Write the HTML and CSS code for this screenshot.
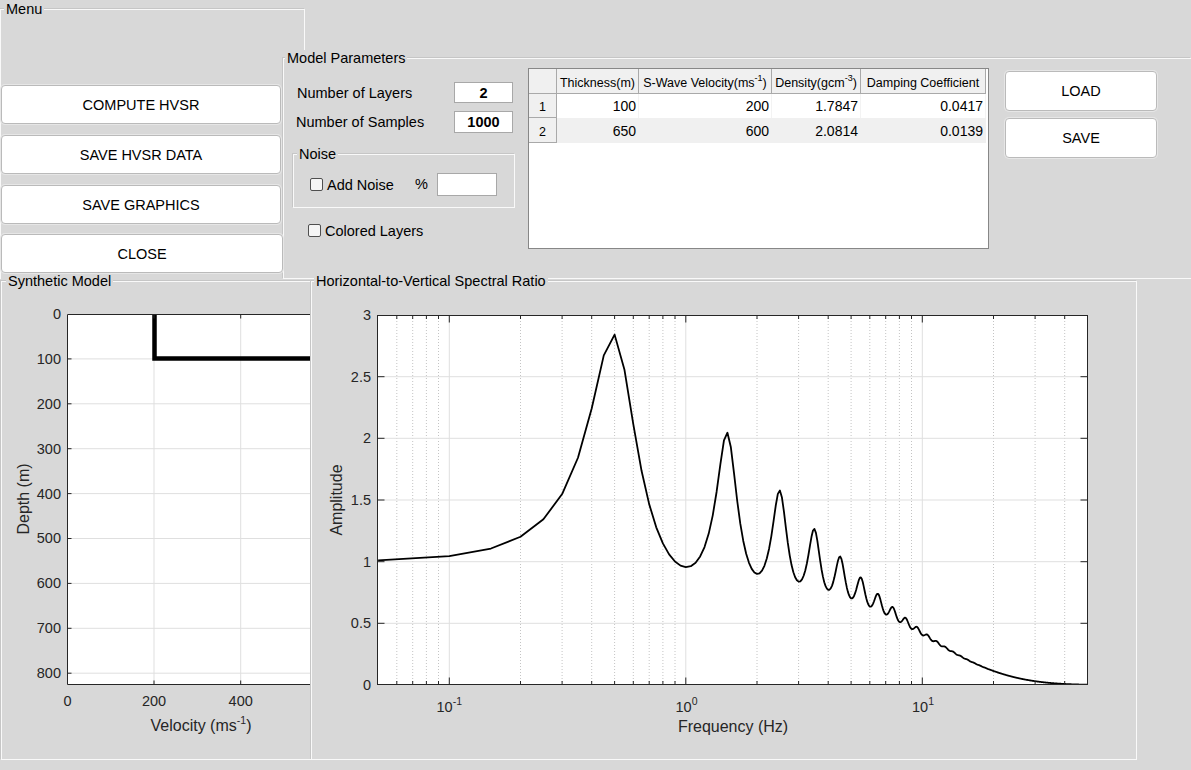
FILE: index.html
```html
<!DOCTYPE html>
<html lang="en">
<head>
<meta charset="utf-8">
<title>HVSR Synthetic Model</title>
<link rel="stylesheet" href="styles.css">
</head>
<body>
<div class="app">
  <div class="top">
    <div class="panel menu-panel"><span class="panel-title title-menu">Menu</span></div>

    <div class="panel params-panel">
      <span class="panel-title title-params">Model Parameters</span>

      <div class="param-form">
        <div class="field-row row-layers">
          <label>Number of Layers</label>
          <input class="num-input" type="text" value="2" readonly>
        </div>
        <div class="field-row row-samples">
          <label>Number of Samples</label>
          <input class="num-input" type="text" value="1000" readonly>
        </div>
        <div class="panel noise-panel">
          <span class="panel-title title-noise">Noise</span>
          <label class="check"><input type="checkbox"><span>Add Noise</span></label>
          <span class="percent">%</span>
          <input class="text-input noise-input" type="text" value="" readonly>
        </div>
        <label class="check colored"><input type="checkbox"><span>Colored Layers</span></label>
      </div>

      <div class="param-table">
        <div class="grid-table">
          <div class="th corner"></div>
          <div class="th"><span>Thickness(m)</span></div>
          <div class="th"><span>S-Wave Velocity(ms<span class="sup">-1</span>)</span></div>
          <div class="th"><span>Density(gcm<span class="sup">-3</span>)</span></div>
          <div class="th"><span>Damping Coefficient</span></div>

          <div class="rh">1</div>
          <div class="td">100</div>
          <div class="td">200</div>
          <div class="td">1.7847</div>
          <div class="td">0.0417</div>

          <div class="rh">2</div>
          <div class="td alt">650</div>
          <div class="td alt">600</div>
          <div class="td alt">2.0814</div>
          <div class="td alt">0.0139</div>
        </div>
      </div>

      <div class="side-buttons">
        <button class="btn btn-side">LOAD</button>
        <button class="btn btn-side">SAVE</button>
      </div>
    </div>

    <div class="menu-buttons">
      <button class="btn btn-menu">COMPUTE HVSR</button>
      <button class="btn btn-menu">SAVE HVSR DATA</button>
      <button class="btn btn-menu">SAVE GRAPHICS</button>
      <button class="btn btn-menu btn-close">CLOSE</button>
    </div>
  </div>

  <div class="bottom">
    <div class="panel synth-panel">
      <span class="panel-title title-synth">Synthetic Model</span>
      <svg class="axes-svg" width="308" height="477" viewBox="0 0 308 477">
        <g transform="translate(-2,-282)">
          <rect x="67" y="314" width="260" height="370" fill="#fff"/>
          <path class="grid-major" d="M154,314V684M240.7,314V684M67,358.9H330M67,403.8H330M67,448.7H330M67,493.6H330M67,538.5H330M67,583.4H330M67,628.3H330M67,673.2H330"/>
          <path class="step-line" d="M154.5,314V358.6H330"/>
          <path class="axis-line" d="M330,314.5H67.5V684.5H330"/>
          <path class="axis-line" d="M67.5,358.9h4M67.5,403.8h4M67.5,448.7h4M67.5,493.6h4M67.5,538.5h4M67.5,583.4h4M67.5,628.3h4M67.5,673.2h4M154,684.5v-4M240.7,684.5v-4M154,314.5v4M240.7,314.5v4"/>
          <g class="tick" text-anchor="end">
            <text x="61" y="319">0</text>
            <text x="61" y="364">100</text>
            <text x="61" y="409">200</text>
            <text x="61" y="454">300</text>
            <text x="61" y="499">400</text>
            <text x="61" y="543">500</text>
            <text x="61" y="588">600</text>
            <text x="61" y="633">700</text>
            <text x="61" y="678">800</text>
          </g>
          <g class="tick" text-anchor="middle">
            <text x="67.5" y="706">0</text>
            <text x="154" y="706">200</text>
            <text x="240.7" y="706">400</text>
          </g>
          <text class="axis-label" x="201" y="731" text-anchor="middle">Velocity (ms<tspan class="sup-t" dy="-7">-1</tspan><tspan dy="7">)</tspan></text>
          <text class="axis-label" transform="translate(29,499) rotate(-90)" text-anchor="middle">Depth (m)</text>
        </g>
      </svg>
    </div>

    <div class="panel hvsr-panel">
      <span class="panel-title title-hvsr">Horizontal-to-Vertical Spectral Ratio</span>
      <svg class="axes-svg" width="824" height="477" viewBox="0 0 824 477">
        <defs>
          <clipPath id="hvsr-clip"><rect x="377" y="315" width="711" height="370"/></clipPath>
        </defs>
        <g transform="translate(-312,-282)">
          <rect x="377" y="315" width="711" height="370" fill="#fff"/>
          <path class="grid-minor" d="M396.8,315V685M412.7,315V685M426.4,315V685M438.5,315V685M520.5,315V685M562.1,315V685M591.7,315V685M614.6,315V685M633.3,315V685M649.2,315V685M662.9,315V685M675,315V685M757,315V685M798.6,315V685M828.2,315V685M851.1,315V685M869.8,315V685M885.7,315V685M899.4,315V685M911.5,315V685M993.5,315V685M1035.1,315V685M1064.7,315V685"/>
          <path class="grid-major" d="M449.3,315V685M685.8,315V685M922.3,315V685M377,376.7H1088M377,438.3H1088M377,500H1088M377,561.7H1088M377,623.3H1088"/>
          <path id="hvsr-curve" class="curve" clip-path="url(#hvsr-clip)" d=""/>
          <rect class="axis-box" x="377.5" y="315.5" width="710" height="369"/>
          <path class="axis-line" d="M377.5,376.7h7M377.5,438.3h7M377.5,500h7M377.5,561.7h7M377.5,623.3h7M1087.5,376.7h-7M1087.5,438.3h-7M1087.5,500h-7M1087.5,561.7h-7M1087.5,623.3h-7M449.3,684.5v-7M685.8,684.5v-7M922.3,684.5v-7M449.3,315.5v7M685.8,315.5v7M922.3,315.5v7"/>
          <path class="axis-line" d="M396.8,684.5v-3.5M412.7,684.5v-3.5M426.4,684.5v-3.5M438.5,684.5v-3.5M520.5,684.5v-3.5M562.1,684.5v-3.5M591.7,684.5v-3.5M614.6,684.5v-3.5M633.3,684.5v-3.5M649.2,684.5v-3.5M662.9,684.5v-3.5M675,684.5v-3.5M757,684.5v-3.5M798.6,684.5v-3.5M828.2,684.5v-3.5M851.1,684.5v-3.5M869.8,684.5v-3.5M885.7,684.5v-3.5M899.4,684.5v-3.5M911.5,684.5v-3.5M993.5,684.5v-3.5M1035.1,684.5v-3.5M1064.7,684.5v-3.5M396.8,315.5v3.5M412.7,315.5v3.5M426.4,315.5v3.5M438.5,315.5v3.5M520.5,315.5v3.5M562.1,315.5v3.5M591.7,315.5v3.5M614.6,315.5v3.5M633.3,315.5v3.5M649.2,315.5v3.5M662.9,315.5v3.5M675,315.5v3.5M757,315.5v3.5M798.6,315.5v3.5M828.2,315.5v3.5M851.1,315.5v3.5M869.8,315.5v3.5M885.7,315.5v3.5M899.4,315.5v3.5M911.5,315.5v3.5M993.5,315.5v3.5M1035.1,315.5v3.5M1064.7,315.5v3.5"/>
          <g class="tick" text-anchor="end">
            <text x="371" y="320">3</text>
            <text x="371" y="382">2.5</text>
            <text x="371" y="443">2</text>
            <text x="371" y="505">1.5</text>
            <text x="371" y="567">1</text>
            <text x="371" y="628">0.5</text>
            <text x="371" y="690">0</text>
          </g>
          <g class="tick" text-anchor="middle">
            <text x="449.3" y="712">10<tspan class="sup-t" dy="-7">-1</tspan></text>
            <text x="686.5" y="712">10<tspan class="sup-t" dy="-7">0</tspan></text>
            <text x="923" y="712">10<tspan class="sup-t" dy="-7">1</tspan></text>
          </g>
          <text class="axis-label" x="733" y="732" text-anchor="middle">Frequency (Hz)</text>
          <text class="axis-label" transform="translate(342,500) rotate(-90)" text-anchor="middle">Amplitude</text>
        </g>
      </svg>
    </div>
  </div>
</div>
<script src="script.js"></script>
</body>
</html>
```

FILE: styles.css
```css
* { box-sizing: border-box; }

html, body { margin: 0; padding: 0; }

body {
  width: 1191px;
  height: 770px;
  overflow: hidden;
  background: #d8d8d8;
  font-family: "Liberation Sans", Arial, sans-serif;
  font-size: 14.5px;
  color: #000;
}

.top {
  display: grid;
  grid-template-columns: 283px 22px 886px;
  grid-template-rows: 9px 49px 221px 2px;
  height: 281px;
}

.panel {
  position: relative;
  border: 1px solid #f9f9f9;
  box-shadow: -1px -1px 0 #c6c6c6;
}

.panel-title {
  position: absolute;
  top: -9px;
  padding: 0 2px;
  background: #d8d8d8;
  font-size: 14.5px;
  line-height: 17px;
  white-space: nowrap;
}

.title-menu { left: 3px; }
.title-params { left: 1px; }
.title-noise { left: 3px; }
.title-synth { left: 4px; }
.title-hvsr { left: 2px; }

.menu-panel {
  grid-column: 1 / 3;
  grid-row: 2 / 4;
  border-bottom: none;
}

.params-panel {
  grid-column: 2 / 4;
  grid-row: 3 / 4;
  border-right: none;
  background: #d8d8d8;
  display: flex;
  align-items: flex-start;
  padding: 9px 0 0 9px;
}

.menu-buttons {
  grid-column: 1 / 2;
  grid-row: 3 / 5;
  z-index: 2;
  display: flex;
  flex-direction: column;
  gap: 11px;
  padding: 27px 0 0 1px;
}

.btn {
  display: block;
  padding: 0;
  background: #fff;
  border: 1px solid #bababa;
  border-radius: 4px;
  box-shadow: 0 0 0 1px #e6e6e6;
  font-family: "Liberation Sans", Arial, sans-serif;
  font-size: 14.5px;
  color: #000;
}

.btn-menu { width: 280px; height: 39px; }
.btn-close { width: 282px; margin-top: -1px; }

/* parameter form */
.param-form {
  flex: none;
  width: 222px;
  display: flex;
  flex-direction: column;
}

.field-row {
  display: flex;
  align-items: center;
  padding-left: 4px;
}

.row-layers { margin-top: 14px; height: 21px; }
.row-samples { margin-top: 8px; height: 22px; padding-left: 3px; }

.num-input,
.text-input {
  background: #fff;
  border: 1px solid #a8a8a8;
  padding: 0;
  font-family: "Liberation Sans", Arial, sans-serif;
  font-size: 14.5px;
  color: #000;
  outline: none;
}

.num-input {
  margin-left: auto;
  margin-right: 2px;
  width: 59px;
  height: 100%;
  font-weight: bold;
  text-align: center;
}

.noise-panel {
  margin-top: 21px;
  width: 222px;
  height: 54px;
  display: flex;
  align-items: flex-start;
  padding: 18px 0 0 16px;
}

.check {
  display: flex;
  align-items: center;
  gap: 4px;
  height: 23px;
}

.check input[type="checkbox"] {
  -webkit-appearance: none;
  appearance: none;
  margin: 0;
  width: 13px;
  height: 13px;
  border: 1px solid #4f4f4f;
  border-radius: 2px;
  background: #f5f5f5;
}

.percent {
  margin-left: 21px;
  line-height: 23px;
}

.noise-input {
  margin-left: 9px;
  width: 60px;
  height: 23px;
}

.colored {
  margin-top: 11px;
  padding-left: 15px;
}

/* table */
.param-table {
  flex: none;
  margin-left: 13px;
  width: 461px;
  height: 181px;
  border: 1px solid #878787;
  background: #fff;
}

.grid-table {
  display: grid;
  grid-template-columns: 28px 82px 133px 89px 125px;
  grid-template-rows: 25px 24px 25px;
}

.th {
  display: flex;
  align-items: center;
  justify-content: center;
  padding-top: 4px;
  background: #f0f0f0;
  border-right: 1px solid #a9a9a9;
  border-bottom: 1px solid #a9a9a9;
  font-size: 12.5px;
  white-space: nowrap;
}

.sup {
  font-size: 9px;
  vertical-align: 6px;
  line-height: 0;
}

.rh {
  display: flex;
  align-items: center;
  justify-content: center;
  padding-top: 3px;
  background: #f0f0f0;
  border-right: 1px solid #a9a9a9;
  border-bottom: 1px solid #a9a9a9;
  font-size: 12.5px;
}

.td {
  display: flex;
  align-items: center;
  justify-content: flex-end;
  padding-right: 2px;
  border-right: 1px solid #f3f3f3;
  font-size: 14px;
}

.td.alt { background: #f0f0f0; border-right-color: #f0f0f0; }

.side-buttons {
  flex: none;
  margin-left: 16px;
  padding-top: 3px;
  display: flex;
  flex-direction: column;
  gap: 7px;
}

.btn-side { width: 152px; height: 40px; }

/* plots */
.bottom {
  display: flex;
  align-items: flex-start;
  height: 479px;
}

.synth-panel {
  margin-left: 1px;
  width: 310px;
  height: 479px;
}

.hvsr-panel {
  width: 826px;
  height: 479px;
}

.axes-svg {
  display: block;
  overflow: hidden;
}

.axes-svg text {
  font-family: "Liberation Sans", Arial, sans-serif;
  fill: #262626;
}

.tick { font-size: 14.5px; }
.axis-label { font-size: 16px; }
.sup-t { font-size: 10.5px; }

.grid-major {
  fill: none;
  stroke: #dfdfdf;
  stroke-width: 1;
}

.grid-minor {
  fill: none;
  stroke: #c4c4c4;
  stroke-width: 1;
  stroke-dasharray: 1 2;
}

.axis-line {
  fill: none;
  stroke: #262626;
  stroke-width: 1;
}

.axis-box {
  fill: none;
  stroke: #262626;
  stroke-width: 1;
}

.step-line {
  fill: none;
  stroke: #000;
  stroke-width: 4.5;
  stroke-linejoin: miter;
}

.curve {
  fill: none;
  stroke: #000;
  stroke-width: 1.8;
  stroke-linejoin: round;
}
```

FILE: script.js
```js
(function () {
  var h = 100, v1 = 200, r1 = 1.7847, x1 = 0.0417;
  var v2 = 600, r2 = 2.0814, x2 = 0.0139;
  var X0 = 685.8, DEC = 236.5, Y0 = 685, SY = 123.333;
  var k = (r1 * v1) / (r2 * v2);
  var ar = k * (1 + x1 * x2) / (1 + x2 * x2);
  var ai = k * (x1 - x2) / (1 + x2 * x2);
  var iar = -ai, iai = ar;
  var pts = [];
  for (var i = 1; i <= 1000; i++) {
    var f = 0.05 * i;
    var w = 2 * Math.PI * f;
    var den = v1 * (1 + x1 * x1);
    var a = w * h / den;
    var b = -w * h * x1 / den;
    var cr = Math.cos(a) * Math.cosh(b);
    var ci = -Math.sin(a) * Math.sinh(b);
    var sr = Math.sin(a) * Math.cosh(b);
    var si = Math.cos(a) * Math.sinh(b);
    var dr = cr + iar * sr - iai * si;
    var di = ci + iar * si + iai * sr;
    var amp = 1 / Math.sqrt(dr * dr + di * di);
    var x = X0 + DEC * Math.log(f) / Math.LN10;
    var y = Y0 - SY * amp;
    pts.push(x.toFixed(2) + ',' + y.toFixed(2));
  }
  var el = document.getElementById('hvsr-curve');
  if (el) { el.setAttribute('d', 'M' + pts.join('L')); }
})();
```
